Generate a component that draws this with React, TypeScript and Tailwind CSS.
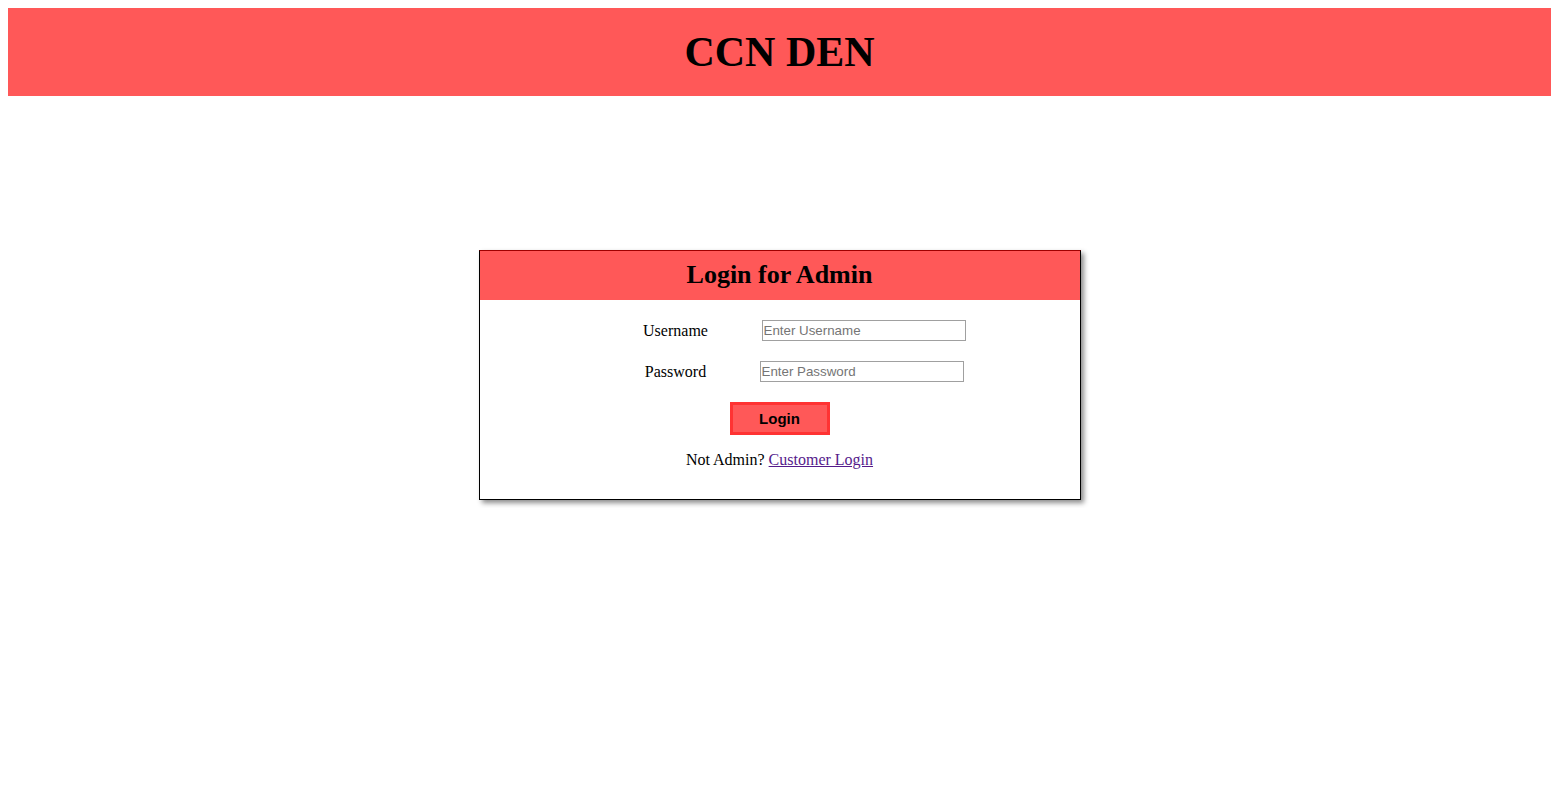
import React from "react";

export default function App() {
  return (
    <div className="m-2 bg-white text-black" style={{ fontFamily: '"Liberation Serif", "Times New Roman", serif' }}>
      <div className="h-[88px] bg-[#ff5858] flex items-center justify-center">
        <h1 className="text-[42px] font-bold leading-none">CCN DEN</h1>
      </div>
      <div className="mt-[154px] mx-auto w-[602px] border border-black border-t-[#a00000] bg-white shadow-[3px_3px_5px_rgba(0,0,0,0.45)]">
        <div className="h-[49px] bg-[#ff5858] flex items-center justify-center pb-[2px]">
          <h2 className="text-[26px] font-bold leading-none">Login for Admin</h2>
        </div>
        <div className="pt-[20px] pb-[30px]">
          <div className="flex items-center pl-[131px] h-[21px]">
            <span className="w-[130px] text-center text-[16px]">Username</span>
            <input
              className="ml-[21px] w-[204px] h-[21px] border border-[#a0a0a0] px-[1px] text-[13.33px] placeholder:text-[#757575] outline-none"
              style={{ fontFamily: '"Liberation Sans", Arial, sans-serif' }}
              placeholder="Enter Username"
            />
          </div>
          <div className="flex items-center pl-[131px] h-[21px] mt-[20px]">
            <span className="w-[130px] text-center text-[16px]">Password</span>
            <input
              type="password"
              className="ml-[19px] w-[204px] h-[21px] border border-[#a0a0a0] px-[1px] text-[13.33px] placeholder:text-[#757575] outline-none"
              style={{ fontFamily: '"Liberation Sans", Arial, sans-serif' }}
              placeholder="Enter Password"
            />
          </div>
          <div className="flex justify-center mt-[20px]">
            <button
              className="w-[100px] h-[33px] border-[3px] border-[#ff3333] bg-[#ff5858] font-bold text-[15px] text-black pt-[1px]"
              style={{ fontFamily: '"Liberation Sans", Arial, sans-serif' }}
            >
              Login
            </button>
          </div>
          <p className="mt-[16px] text-center text-[16px] leading-[18px]">
            Not Admin?{" "}
            <a href="#" className="text-[#551a8b] underline">
              Customer Login
            </a>
          </p>
        </div>
      </div>
    </div>
  );
}
